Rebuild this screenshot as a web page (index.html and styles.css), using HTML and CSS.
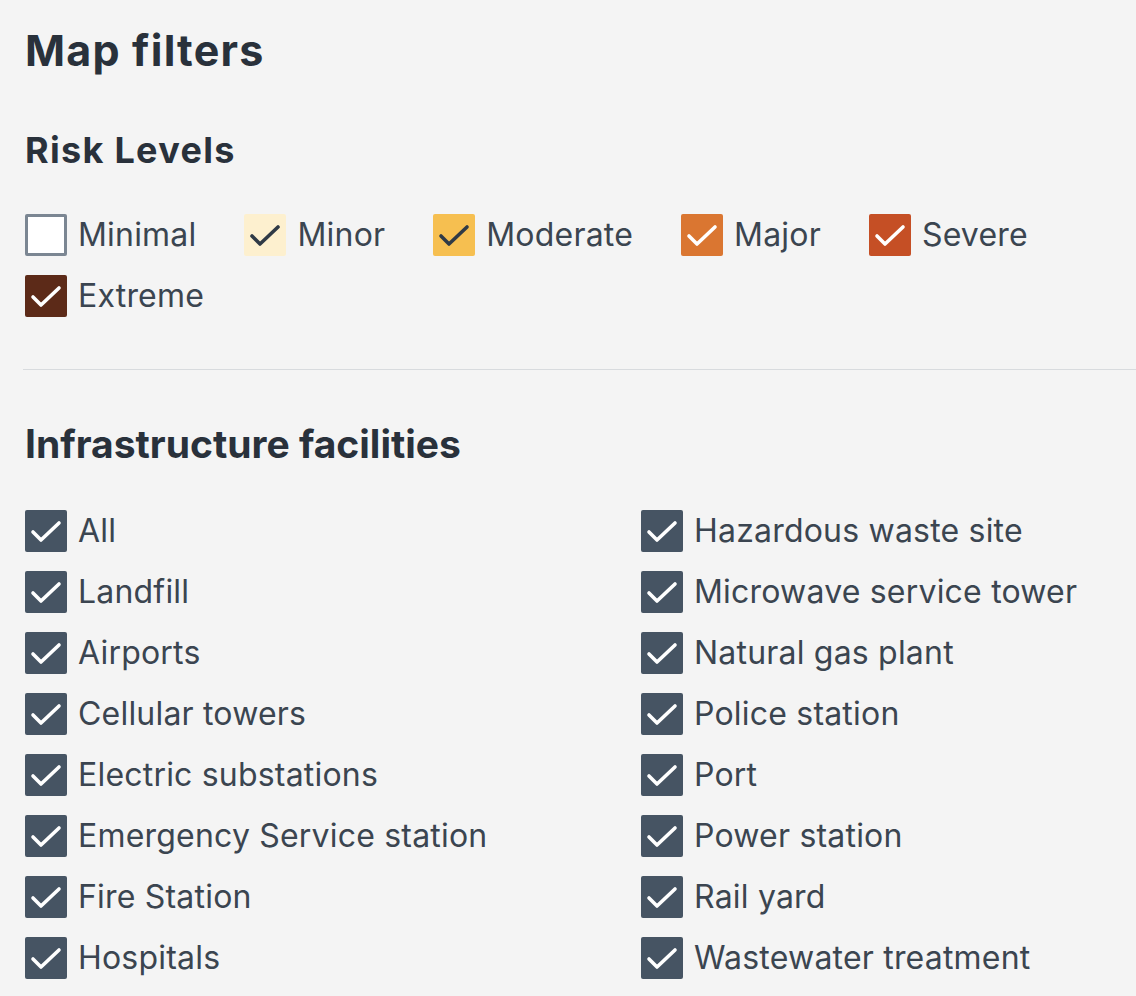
FILE: index.html
```html
<!DOCTYPE html>
<html>
<head>
<meta charset="utf-8">
<link rel="stylesheet" href="styles.css">
</head>
<body>
<div class="panel">
  <h1 class="title">Map filters</h1>

  <section class="risk">
    <h2 class="risk-title">Risk Levels</h2>
    <div class="risk-list">
      <label class="item"><span class="box box-minimal"></span><span class="label">Minimal</span></label>
      <label class="item"><span class="box box-minor"><svg viewBox="0 0 42 42"><polyline points="8,22 16,30 34,13" class="chk-dark"/></svg></span><span class="label">Minor</span></label>
      <label class="item"><span class="box box-moderate"><svg viewBox="0 0 42 42"><polyline points="8,22 16,30 34,13" class="chk-dark"/></svg></span><span class="label">Moderate</span></label>
      <label class="item"><span class="box box-major"><svg viewBox="0 0 42 42"><polyline points="8,22 16,30 34,13" class="chk"/></svg></span><span class="label">Major</span></label>
      <label class="item"><span class="box box-severe"><svg viewBox="0 0 42 42"><polyline points="8,22 16,30 34,13" class="chk"/></svg></span><span class="label">Severe</span></label>
      <label class="item"><span class="box box-extreme"><svg viewBox="0 0 42 42"><polyline points="8,22 16,30 34,13" class="chk"/></svg></span><span class="label">Extreme</span></label>
    </div>
  </section>

  <hr class="divider">

  <section class="infra">
    <h2 class="infra-title">Infrastructure facilities</h2>
    <div class="infra-grid">
      <div class="col">
        <label class="item"><span class="box box-slate"><svg viewBox="0 0 42 42"><polyline points="8,22 16,30 34,13" class="chk"/></svg></span><span class="label">All</span></label>
        <label class="item"><span class="box box-slate"><svg viewBox="0 0 42 42"><polyline points="8,22 16,30 34,13" class="chk"/></svg></span><span class="label">Landfill</span></label>
        <label class="item"><span class="box box-slate"><svg viewBox="0 0 42 42"><polyline points="8,22 16,30 34,13" class="chk"/></svg></span><span class="label">Airports</span></label>
        <label class="item"><span class="box box-slate"><svg viewBox="0 0 42 42"><polyline points="8,22 16,30 34,13" class="chk"/></svg></span><span class="label">Cellular towers</span></label>
        <label class="item"><span class="box box-slate"><svg viewBox="0 0 42 42"><polyline points="8,22 16,30 34,13" class="chk"/></svg></span><span class="label">Electric substations</span></label>
        <label class="item"><span class="box box-slate"><svg viewBox="0 0 42 42"><polyline points="8,22 16,30 34,13" class="chk"/></svg></span><span class="label">Emergency Service station</span></label>
        <label class="item"><span class="box box-slate"><svg viewBox="0 0 42 42"><polyline points="8,22 16,30 34,13" class="chk"/></svg></span><span class="label">Fire Station</span></label>
        <label class="item"><span class="box box-slate"><svg viewBox="0 0 42 42"><polyline points="8,22 16,30 34,13" class="chk"/></svg></span><span class="label">Hospitals</span></label>
      </div>
      <div class="col">
        <label class="item"><span class="box box-slate"><svg viewBox="0 0 42 42"><polyline points="8,22 16,30 34,13" class="chk"/></svg></span><span class="label">Hazardous waste site</span></label>
        <label class="item"><span class="box box-slate"><svg viewBox="0 0 42 42"><polyline points="8,22 16,30 34,13" class="chk"/></svg></span><span class="label">Microwave service tower</span></label>
        <label class="item"><span class="box box-slate"><svg viewBox="0 0 42 42"><polyline points="8,22 16,30 34,13" class="chk"/></svg></span><span class="label">Natural gas plant</span></label>
        <label class="item"><span class="box box-slate"><svg viewBox="0 0 42 42"><polyline points="8,22 16,30 34,13" class="chk"/></svg></span><span class="label">Police station</span></label>
        <label class="item"><span class="box box-slate"><svg viewBox="0 0 42 42"><polyline points="8,22 16,30 34,13" class="chk"/></svg></span><span class="label">Port</span></label>
        <label class="item"><span class="box box-slate"><svg viewBox="0 0 42 42"><polyline points="8,22 16,30 34,13" class="chk"/></svg></span><span class="label">Power station</span></label>
        <label class="item"><span class="box box-slate"><svg viewBox="0 0 42 42"><polyline points="8,22 16,30 34,13" class="chk"/></svg></span><span class="label">Rail yard</span></label>
        <label class="item"><span class="box box-slate"><svg viewBox="0 0 42 42"><polyline points="8,22 16,30 34,13" class="chk"/></svg></span><span class="label">Wastewater treatment</span></label>
      </div>
    </div>
  </section>
</div>
</body>
</html>
```

FILE: styles.css
```css
html, body {
  margin: 0;
  padding: 0;
  background: #f4f4f4;
}

body {
  font-family: Inter, "Noto Sans", "Liberation Sans", sans-serif;
  color: #3b4550;
  overflow: hidden;
}

.panel {
  padding: 25px 0 0 25px;
}

.title {
  margin: 0;
  font-size: 43px;
  line-height: 50px;
  font-weight: 700;
  color: #29313b;
  letter-spacing: 1.2px;
}

.risk-title {
  margin: 55px 0 0 0;
  font-size: 36px;
  line-height: 40px;
  font-weight: 700;
  color: #29313b;
  letter-spacing: 1.3px;
}

.risk-list {
  margin-top: 44px;
  display: flex;
  flex-wrap: wrap;
  column-gap: 48px;
  row-gap: 19px;
  max-width: 1060px;
}

.item {
  display: flex;
  align-items: center;
  gap: 11px;
  height: 42px;
}

.box {
  width: 42px;
  height: 42px;
  box-sizing: border-box;
  border-radius: 2px;
  flex: none;
  display: block;
}

.box svg {
  width: 42px;
  height: 42px;
  display: block;
}

.chk, .chk-dark {
  fill: none;
  stroke-width: 3.6;
  stroke-linecap: round;
  stroke-linejoin: round;
}

.chk { stroke: #ffffff; }
.chk-dark { stroke: #2f3a46; }

.box-minimal {
  background: #ffffff;
  border: 3px solid #7b8692;
}
.box-minor { background: #fdf0cf; }
.box-moderate { background: #f6bf50; }
.box-major { background: #da7631; }
.box-severe { background: #c54f25; }
.box-extreme { background: #5c2a18; }
.box-slate { background: #465463; }

.label {
  font-size: 32px;
  line-height: 42px;
  color: #3b4550;
  letter-spacing: 0.2px;
  white-space: nowrap;
}

.divider {
  margin: 52px 0 0 -2px;
  border: 0;
  height: 1px;
  background: #d8dbde;
}

.infra-title {
  margin: 51px 0 0 0;
  font-size: 39px;
  line-height: 46px;
  font-weight: 700;
  color: #29313b;
}

.infra-grid {
  margin-top: 43px;
  display: grid;
  grid-template-columns: 616px 1fr;
}

.col {
  display: flex;
  flex-direction: column;
  gap: 19px;
}
```
